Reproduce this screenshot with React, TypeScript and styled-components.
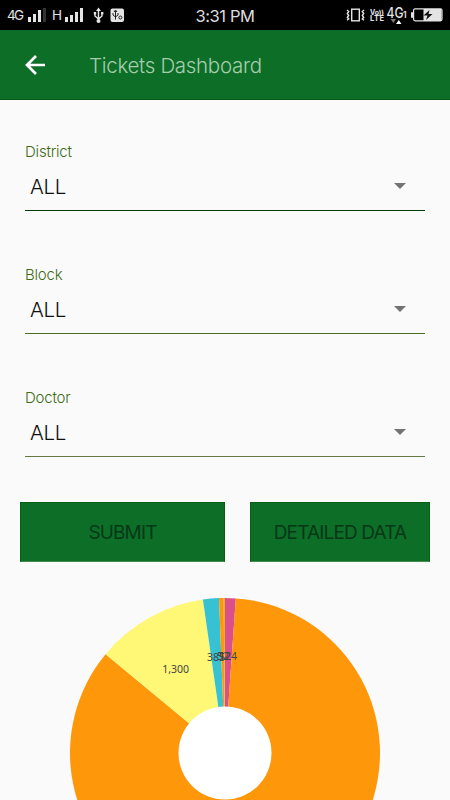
import React from 'react';
import styled, { createGlobalStyle } from 'styled-components';

const GlobalStyle = createGlobalStyle`
  * { box-sizing: border-box; }
  body { margin: 0; background: #fafafa; font-family: Inter, Roboto, sans-serif; }
`;

const Screen = styled.div`
  width: 450px;
  height: 800px;
  overflow: hidden;
  display: flex;
  flex-direction: column;
  background: #fafafa;
`;

const StatusBar = styled.div`
  flex: none;
  height: 30px;
  display: grid;
  grid-template-columns: 180px 90px 180px;
  background: #000;
`;

const StatusIcons = styled.svg`
  display: block;
  width: 180px;
  height: 30px;
`;

const Clock = styled.div`
  height: 30px;
  color: #ddd;
  font-size: 16.5px;
  line-height: 32px;
  letter-spacing: -0.4px;
  text-align: center;
  white-space: nowrap;
`;

const AppBar = styled.header`
  flex: none;
  height: 70px;
  display: flex;
  align-items: center;
  padding-left: 25px;
  background: #0d6e27;
  border-bottom: 1px solid #07591a;
`;

const BackIcon = styled.svg`
  width: 21px;
  height: 20px;
  margin-right: 43px;
`;

const Title = styled.h1`
  margin: 2px 0 0;
  color: #a5cdae;
  font-size: 20.5px;
  font-weight: 300;
  letter-spacing: -0.3px;
  white-space: nowrap;
`;

const Form = styled.main`
  flex: none;
  height: 402px;
  display: flex;
  flex-direction: column;
  padding: 41px 25px 0;
`;

const Field = styled.div`
  flex: none;
  height: 123.2px;
`;

const Label = styled.div`
  height: 22px;
  color: #406b17;
  font-size: 15px;
  font-weight: 300;
  line-height: 22px;
  letter-spacing: -0.2px;
`;

const Select = styled.div<{ $line: string }>`
  height: 48px;
  display: flex;
  align-items: center;
  justify-content: space-between;
  padding: 0 19px 0 5px;
  border-bottom: 1px solid ${(p) => p.$line};
  color: #111;
  font-size: 20.5px;
  font-weight: 300;
  letter-spacing: -0.3px;
`;

const Caret = styled.svg`
  width: 12px;
  height: 6px;
  margin-bottom: 1px;
`;

const Buttons = styled.div`
  flex: none;
  height: 60px;
  display: grid;
  grid-template-columns: 205px 180px;
  gap: 25px;
  margin: 0 20px;
`;

const Button = styled.button`
  padding: 1px 0 0;
  border: 1px solid #08600f;
  border-bottom-color: #438c4d;
  background: #0d6e27;
  color: #063817;
  font-family: inherit;
  font-size: 19px;
  font-weight: 400;
  line-height: 22px;
  letter-spacing: -0.85px;
  white-space: nowrap;
`;

const Chart = styled.svg`
  flex: none;
  display: block;
  width: 310px;
  height: 310px;
  margin: 36px 0 0 70px;
`;

const ChartLabel = styled.text`
  fill: #444;
  font-family: 'Noto Sans', sans-serif;
  font-size: 10.5px;
  text-anchor: middle;
`;

const SmallText = styled.text`
  fill: #e4e4e4;
  font-family: Inter, sans-serif;
`;

const fields = [
  { name: 'District', line: '#003b08' },
  { name: 'Block', line: '#4b6e24' },
  { name: 'Doctor', line: '#647747' },
];

const slices = [
  { from: 0, to: 4, color: '#db4f8b' },
  { from: 4, to: 309.6, color: '#ff970a' },
  { from: 309.6, to: 351.8, color: '#fff776' },
  { from: 351.8, to: 357.8, color: '#36c2d2' },
  { from: 357.8, to: 359.5, color: '#ff970a' },
  { from: 359.5, to: 360, color: '#f1ae20' },
];

const labels = [
  { text: '1,300', x: 105.6, y: 75 },
  { text: '385', x: 146, y: 63 },
  { text: '52', x: 153, y: 62 },
  { text: '12', x: 155, y: 62 },
  { text: '124', x: 158, y: 62 },
];

function point(angle: number, radius: number) {
  const a = (angle * Math.PI) / 180;
  return `${155 + Math.sin(a) * radius} ${155 - Math.cos(a) * radius}`;
}

function slicePath(from: number, to: number) {
  const large = to - from > 180 ? 1 : 0;
  return `M${point(from, 155)} A155 155 0 ${large} 1 ${point(to, 155)} L${point(to, 46)} A46 46 0 ${large} 0 ${point(from, 46)} Z`;
}

function LeftStatus() {
  return (
    <StatusIcons viewBox="0 0 180 30">
      <SmallText x="7" y="20" fontSize="13.5" textLength="17">4G</SmallText>
      <g fill="#e4e4e4">
        <path d="M28 17h3v5h-3zM33 14h3v8h-3zM38 10h3v12h-3z" />
        <path d="M43 8h3v14h-3z" fill="#333" />
        <path d="M65 17h3v5h-3zM70 15h3v7h-3zM75 12h3v10h-3zM80 8h3v14h-3z" />
      </g>
      <SmallText x="52" y="20" fontSize="13.5" textLength="10">H</SmallText>
      <g stroke="#e4e4e4" strokeWidth="1.4" fill="none">
        <path d="M98.5 10v11M95 13v3l3.5 3 3.5-3v-3" />
        <path d="M98.5 7.5l2.5 3.5h-5z" fill="#e4e4e4" stroke="none" />
        <circle cx="98.5" cy="21" r="2" fill="#e4e4e4" stroke="none" />
        <path d="M93.8 12h2.4v2.5h-2.4zM101 12h2.4v2.5H101z" fill="#e4e4e4" stroke="none" />
      </g>
      <rect x="110.5" y="8.5" width="13.5" height="13.5" rx="2" fill="#e4e4e4" />
      <g fill="none" stroke="#222" strokeWidth="1">
        <path d="M115.5 10.5v9M113 13v2l2.5 2 2.5-2v-2M114 12l1.5-2 1.5 2" />
        <circle cx="120.4" cy="17.5" r="1.5" />
      </g>
    </StatusIcons>
  );
}

function RightStatus() {
  return (
    <StatusIcons viewBox="270 0 180 30">
      <g stroke="#e4e4e4" fill="none" strokeWidth="1.4">
        <rect x="351.7" y="9.2" width="7.6" height="11.6" />
        <path d="M347 10l1.7 1.5-1.4 2 1.4 2-1.4 2 1.4 1.5-1.7 1.2M364 10l-1.7 1.5 1.4 2-1.4 2 1.4 2-1.4 1.5 1.7 1.2" />
      </g>
      <SmallText x="370" y="14.5" fontSize="7" fontWeight="700" textLength="14">Vo))</SmallText>
      <SmallText x="370" y="21" fontSize="7.5" fontWeight="700" textLength="14">LTE</SmallText>
      <SmallText x="386.5" y="18" fontSize="14" fontWeight="500" textLength="17" lengthAdjust="spacingAndGlyphs">4G</SmallText>
      <SmallText x="403" y="18" fontSize="8.5" fontWeight="600">1</SmallText>
      <path d="M390.5 19h5.5l-2.7 4z" fill="#777" />
      <path d="M396 24h5.5l-2.7-4z" fill="#fff" />
      <rect x="413.6" y="8.8" width="28.4" height="12" rx="1.5" fill="#000" stroke="#e4e4e4" strokeWidth="1.2" />
      <rect x="411" y="12" width="2" height="6" rx="1" fill="#e4e4e4" />
      <path d="M423.5 9h18v12h-18z" fill="#e4e4e4" />
      <path d="M429.5 10l-6 5.5h4l-1.5 4.5 6.5-6h-4z" fill="#111" />
    </StatusIcons>
  );
}

export default function App() {
  return (
    <>
      <GlobalStyle />
      <Screen>
        <StatusBar>
          <LeftStatus />
          <Clock>3:31 PM</Clock>
          <RightStatus />
        </StatusBar>
        <AppBar>
          <BackIcon viewBox="0 0 21 20" fill="none" stroke="#fff" strokeWidth="2.7">
            <path d="M20 10H2M11 1l-9 9 9 9" />
          </BackIcon>
          <Title>Tickets Dashboard</Title>
        </AppBar>
        <Form>
          {fields.map((field) => (
            <Field key={field.name}>
              <Label>{field.name}</Label>
              <Select $line={field.line}>
                <span>ALL</span>
                <Caret viewBox="0 0 12 6"><path d="M0 0h12L6 6z" fill="#737373" /></Caret>
              </Select>
            </Field>
          ))}
        </Form>
        <Buttons>
          <Button>SUBMIT</Button>
          <Button>DETAILED DATA</Button>
        </Buttons>
        <Chart viewBox="0 0 310 310">
          {slices.map((s) => (
            <path key={s.from} d={slicePath(s.from, s.to)} fill={s.color} />
          ))}
          <circle cx="155" cy="155" r="46.5" fill="#fff" />
          {labels.map((l) => (
            <ChartLabel key={l.text} x={l.x} y={l.y}>{l.text}</ChartLabel>
          ))}
        </Chart>
      </Screen>
    </>
  );
}
